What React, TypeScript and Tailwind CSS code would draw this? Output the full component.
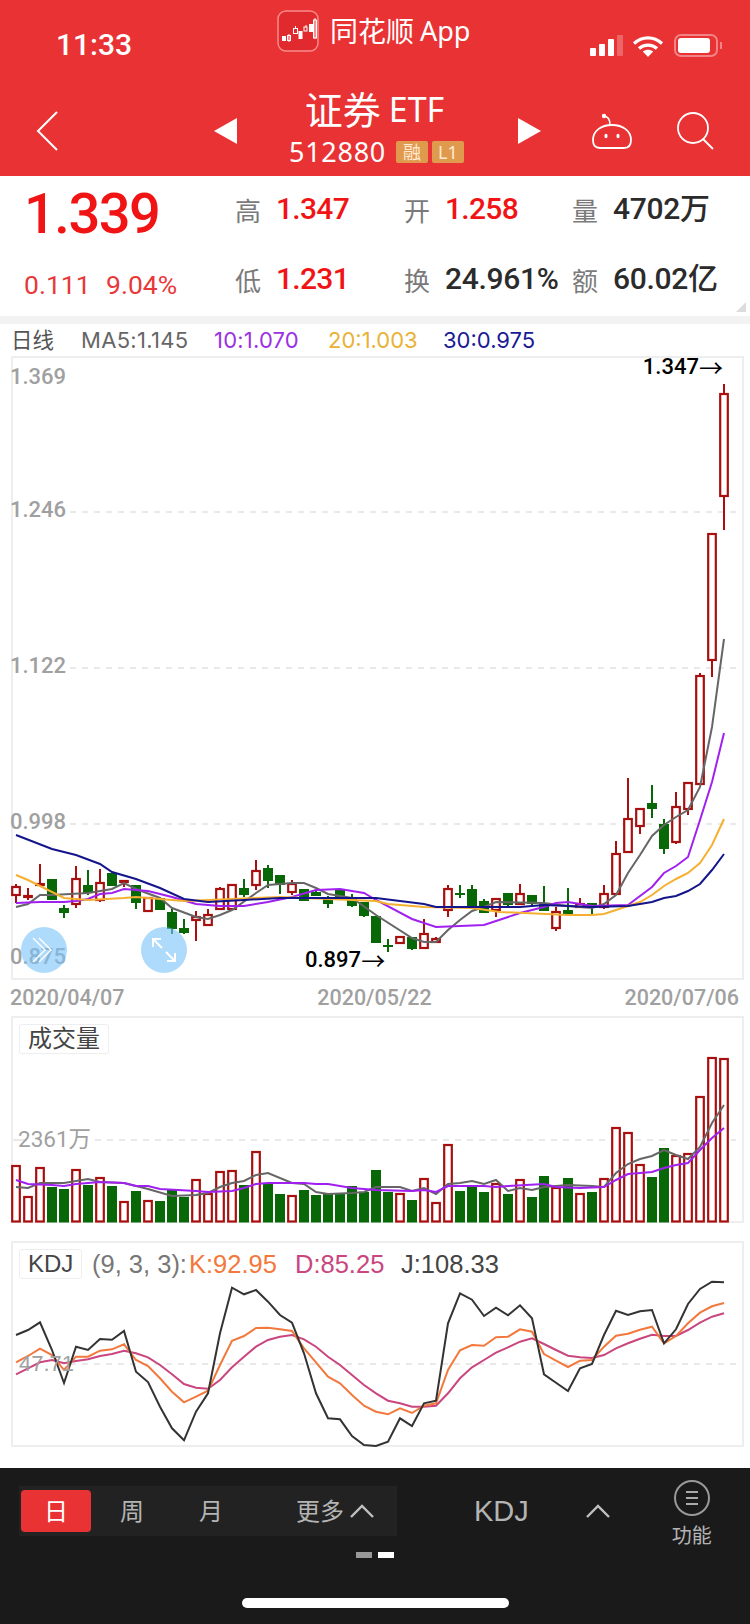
const RED = "#a80f0f";
const GREEN = "#086808";

// [up, high, bodyTop, bodyBottom, low], x is 16 + 12 * index
const candles: [number, number, number, number, number][] = [
  [1, 884, 887, 895, 903], [1, 888, 896, 897, 900], [1, 864, 884, 885, 885], [0, 879, 879, 900, 900],
  [0, 905, 908, 913, 918], [1, 866, 879, 904, 908], [0, 870, 885, 893, 895], [1, 869, 883, 900, 902],
  [0, 873, 873, 886, 886], [1, 880, 881, 882, 887], [0, 885, 885, 903, 909], [1, 898, 898, 911, 912],
  [0, 898, 898, 910, 910], [0, 909, 912, 929, 934], [0, 919, 928, 933, 934], [1, 911, 917, 920, 941],
  [1, 909, 915, 925, 926], [1, 887, 889, 909, 909], [1, 885, 885, 909, 909], [0, 879, 888, 895, 897],
  [1, 860, 871, 885, 890], [0, 865, 868, 881, 888], [0, 875, 875, 885, 894], [1, 880, 884, 892, 895],
  [0, 889, 889, 901, 901], [0, 891, 892, 896, 896], [0, 896, 897, 904, 908], [0, 890, 890, 897, 900],
  [0, 894, 897, 906, 907], [0, 902, 902, 916, 917], [0, 916, 916, 943, 943], [0, 939, 945, 946, 952],
  [1, 937, 937, 943, 943], [0, 937, 937, 949, 950], [1, 919, 934, 948, 948], [1, 937, 939, 942, 942],
  [1, 885, 889, 910, 917], [0, 885, 893, 894, 898], [0, 885, 889, 906, 907], [0, 899, 901, 913, 913],
  [1, 899, 899, 910, 917], [0, 893, 893, 905, 907], [1, 884, 894, 904, 904], [0, 895, 895, 904, 907],
  [0, 886, 903, 911, 911], [1, 907, 912, 928, 931], [0, 888, 910, 914, 914], [1, 898, 904, 907, 907],
  [0, 903, 903, 908, 914], [1, 885, 894, 907, 909], [1, 841, 854, 894, 894], [1, 778, 819, 852, 853],
  [1, 809, 809, 826, 834], [0, 785, 803, 809, 818], [0, 819, 824, 849, 854], [1, 792, 807, 842, 844],
  [1, 783, 783, 809, 815], [1, 673, 676, 784, 784], [1, 534, 534, 660, 677], [1, 384, 394, 496, 530],
];

const volumeTops = [
  1166, 1197, 1168, 1187, 1189, 1170, 1185, 1178, 1186, 1202, 1191, 1201, 1201, 1190, 1197, 1180, 1194, 1172, 1171, 1185,
  1152, 1184, 1194, 1196, 1190, 1195, 1194, 1193, 1186, 1192, 1170, 1192, 1194, 1200, 1179, 1203, 1145, 1191, 1187, 1192,
  1184, 1194, 1180, 1197, 1176, 1188, 1178, 1194, 1192, 1179, 1128, 1133, 1165, 1177, 1148, 1156, 1154, 1097, 1058, 1059,
];

const ma5 = "16,907 28,904 40,895 52,895 88,893 112,889 124,883 136,889 160,898 172,908 196,917 208,919 220,915 232,910 256,893 268,885 292,883 304,883 316,888 328,894 352,898 376,915 412,938 424,942 436,942 448,930 460,920 472,911 484,907 496,902 544,903 568,906 592,908 604,904 616,895 628,873 640,855 652,836 664,825 676,817 688,810 700,787 712,727 724,639";
const ma10 = "16,903 40,902 64,902 76,901 88,899 100,894 112,893 124,889 148,891 172,897 196,904 220,906 244,906 268,902 292,897 316,890 340,889 364,893 376,900 412,919 436,927 484,925 520,913 544,907 556,903 568,902 592,906 628,905 640,896 652,887 664,873 676,866 688,857 700,820 712,782 724,733";
const ma20 = "16,875 28,880 64,898 88,900 124,898 136,897 184,901 232,899 280,897 376,901 388,904 424,907 472,908 500,912 568,915 592,915 604,914 616,910 640,902 652,895 664,886 676,879 688,873 700,863 712,845 724,819";
const ma30 = "16,835 52,849 76,855 100,864 112,872 136,879 160,888 184,899 208,902 244,900 280,898 376,898 424,904 436,907 472,907 520,907 544,905 592,907 628,906 652,902 664,898 676,896 688,891 700,884 712,870 724,854";

const volGray = "16,1187 28,1188 40,1183 64,1183 88,1179 100,1182 124,1183 148,1189 172,1196 196,1195 208,1193 220,1187 232,1183 244,1181 256,1175 268,1173 292,1183 304,1184 316,1192 328,1194 352,1193 364,1192 376,1187 400,1187 412,1191 424,1188 436,1194 448,1184 460,1183 472,1181 484,1184 496,1180 508,1191 520,1188 532,1190 544,1187 568,1185 592,1186 604,1187 616,1173 628,1164 640,1159 652,1156 664,1150 676,1155 688,1159 700,1147 712,1123 724,1105";
const volPurple = "16,1180 28,1184 52,1185 64,1186 76,1184 100,1182 124,1183 136,1186 148,1186 160,1189 196,1191 208,1192 232,1191 244,1188 256,1184 268,1183 304,1183 316,1184 328,1184 352,1188 376,1190 412,1191 424,1190 436,1192 448,1186 484,1186 496,1187 508,1186 544,1184 556,1187 580,1188 604,1187 616,1180 628,1174 652,1172 664,1168 676,1165 688,1163 700,1150 712,1138 724,1128";

// plot values read off the reference, x is 16 + 12 * index
const kdjJ = [315, 300, 277, 360, 459, 350, 360, 327, 329, 303, 425, 456, 530, 595, 631, 545, 490, 310, 173, 193, 180, 215, 255, 278, 370, 490, 565, 568, 618, 645, 648, 635, 565, 588, 520, 512, 280, 190, 209, 258, 233, 256, 226, 265, 433, 458, 483, 415, 402, 315, 242, 255, 244, 240, 340, 298, 222, 177, 155, 157];
const kdjK = [397, 378, 356, 375, 420, 380, 380, 362, 358, 343, 390, 408, 445, 485, 517, 500, 482, 405, 332, 318, 294, 293, 298, 303, 355, 397, 440, 460, 495, 527, 545, 553, 535, 549, 527, 520, 420, 361, 345, 347, 322, 320, 298, 305, 372, 392, 411, 392, 390, 350, 317, 311, 299, 290, 340, 318, 280, 248, 229, 219];
const kdjD = [433, 415, 397, 390, 400, 393, 388, 378, 372, 362, 370, 382, 405, 433, 462, 473, 476, 450, 412, 380, 350, 330, 320, 315, 328, 350, 380, 405, 435, 465, 490, 512, 520, 530, 530, 527, 490, 445, 412, 390, 368, 352, 335, 325, 342, 360, 377, 382, 384, 375, 355, 340, 326, 314, 318, 318, 300, 278, 260, 250];

const kdjPoints = (values: number[]) =>
  values.map((v, i) => `${16 + 12 * i},${(1230 + v / 3).toFixed(1)}`).join(" ");

function Logo() {
  return (
    <svg width="42" height="42" viewBox="0 0 42 42" fill="none" className="shrink-0">
      <rect x="1" y="1" width="40" height="40" rx="8" fill="#e02a2e" stroke="#f98a8a" strokeWidth="1.5" />
      <rect x="5" y="26" width="4" height="5" fill="#fff" />
      <rect x="10.5" y="25.5" width="3" height="5" stroke="#fff" />
      <path d="M12 24v8M18.5 16v3M29 15v2M38 8v21" stroke="#fff" />
      <rect x="16.5" y="18.5" width="4" height="5" stroke="#fff" />
      <rect x="21.5" y="21" width="4" height="8" fill="#fff" />
      <rect x="27" y="17" width="3" height="4" stroke="#fff" />
      <rect x="32" y="14" width="4" height="8" fill="#fff" />
      <rect x="36.5" y="10" width="3" height="18" stroke="#fff" />
    </svg>
  );
}

function StatusIcons() {
  return (
    <div className="flex items-center mt-[2px]">
      <div className="flex items-end gap-[3px] h-[21px]">
        <div className="w-[6px] h-[8px] rounded-[1px] bg-white" />
        <div className="w-[6px] h-[12px] rounded-[1px] bg-white" />
        <div className="w-[6px] h-[17px] rounded-[1px] bg-white" />
        <div className="w-[6px] h-[21px] rounded-[1px] bg-white/25" />
      </div>
      <svg width="32" height="22" viewBox="0 0 32 22" fill="none" className="ml-[9px]">
        <path d="M2 8.5C10 1 22 1 30 8.5" stroke="#fff" strokeWidth="3.2" />
        <path d="M7 13.5C12 9 20 9 25 13.5" stroke="#fff" strokeWidth="3.2" />
        <path d="M16 22l-5.2-5.4c3-2.4 7.4-2.4 10.4 0z" fill="#fff" />
      </svg>
      <div className="ml-[10px] w-[44px] h-[23px] rounded-[7px] border-2 border-white/40 flex items-center px-[2px]">
        <div className="w-[32px] h-[15px] rounded-[3px] bg-white" />
      </div>
      <div className="ml-[2px] w-[2px] h-[7px] bg-white/40" />
    </div>
  );
}

function Header() {
  return (
    <div className="h-[176px] shrink-0 bg-[#e93234] text-white relative">
      <div className="flex h-[64px] pl-[56px] pr-[28px] items-start">
        <div className="w-[221px] pt-[26px] text-[30px] leading-[38px] font-medium font-['Roboto',sans-serif]">
          11:33
        </div>
        <div className="flex items-center pt-[10px]">
          <Logo />
          <div className="ml-[11px] text-[28px] leading-[42px]">同花顺</div>
          <div className="ml-[6px] text-[27px] leading-[42px]">App</div>
        </div>
        <div className="ml-auto pt-[32px]">
          <StatusIcons />
        </div>
      </div>
      <div className="flex h-[112px] relative">
        <svg width="22" height="40" viewBox="0 0 22 40" fill="none" className="ml-[36px] mt-[47px]">
          <path d="M21 1L2 20l19 19" stroke="#fff" strokeWidth="2" />
        </svg>
        <svg width="23" height="26" viewBox="0 0 23 26" className="ml-[156px] mt-[54px]">
          <path d="M23 0v26L0 13z" fill="#fff" />
        </svg>
        <div className="w-[281px] flex flex-col items-center">
          <div className="flex items-center h-[46px] mt-[22px] pr-[6px]">
            <span className="text-[38px] leading-[46px]">证券</span>
            <span className="ml-[8px] text-[34px] leading-[46px]">ETF</span>
          </div>
          <div className="flex items-center h-[26px] mt-[7px] -ml-[2px]">
            <span className="text-[27px] leading-[26px] tracking-[0.7px] mr-[10px]">512880</span>
            <span className="w-[32px] h-[22px] rounded-[2px] bg-[#e09a4e] text-[18px] leading-[22px] text-center text-[#ffe9d2]">融</span>
            <span className="ml-[4px] w-[32px] h-[22px] rounded-[2px] bg-[#e09a4e] text-[18px] leading-[22px] text-center text-[#ffe9d2]">L1</span>
          </div>
        </div>
        <svg width="23" height="26" viewBox="0 0 23 26" className="mt-[54px]">
          <path d="M0 0v26l23-13z" fill="#fff" />
        </svg>
        <svg width="42" height="38" viewBox="0 0 42 38" fill="none" className="ml-[50px] mt-[48px]">
          <circle cx="13" cy="4" r="2.2" fill="#fff" />
          <path d="M13 4c4 .5 6 3 6 9" stroke="#fff" strokeWidth="1.6" />
          <path d="M2 28c0-9 8-15 19-15s19 6 19 15c0 5-2 8-7 8H9c-5 0-7-3-7-8z" stroke="#fff" strokeWidth="1.8" />
          <ellipse cx="15" cy="24" rx="1.6" ry="2.2" fill="#fff" />
          <ellipse cx="27" cy="24" rx="1.6" ry="2.2" fill="#fff" />
        </svg>
        <svg width="38" height="38" viewBox="0 0 38 38" fill="none" className="ml-[43px] mt-[48px]">
          <circle cx="17" cy="16" r="15" stroke="#fff" strokeWidth="1.8" />
          <path d="M27 27l10 10" stroke="#fff" strokeWidth="1.8" />
        </svg>
      </div>
    </div>
  );
}

function Stat({ label, value, dark }: { label: string; value: string; dark?: boolean }) {
  return (
    <div className="flex items-center">
      <span className="w-[41px] shrink-0 text-[26px] text-[#7a7a7a]">{label}</span>
      <span
        className={
          (dark ? "text-[#2b2b2b] tracking-[-0.3px] " : "text-[#f01414] tracking-[-0.7px] ") +
          "pb-[5px] text-[30px] font-medium whitespace-nowrap font-['Roboto','Noto_Sans_CJK_SC',sans-serif]"
        }
      >
        {value}
      </span>
    </div>
  );
}

function Quote() {
  return (
    <div className="h-[140px] shrink-0 flex relative">
      <div className="w-[235px] shrink-0 pl-[24px] pt-[2px] font-['Roboto','Noto_Sans_CJK_SC',sans-serif]">
        <div className="text-[56px] leading-[72px] font-medium text-[#f01414] tracking-[-1.5px]">1.339</div>
        <div className="flex mt-[15px] text-[#e8383a] text-[26.5px] leading-[40px]">
          <span className="w-[82px]">0.111</span>
          <span>9.04%</span>
        </div>
      </div>
      <div className="grid grid-cols-[169px_168px_1fr] grid-rows-2 flex-1">
        <Stat label="高" value="1.347" />
        <Stat label="开" value="1.258" />
        <Stat label="量" value="4702万" dark />
        <Stat label="低" value="1.231" />
        <Stat label="换" value="24.961%" dark />
        <Stat label="额" value="60.02亿" dark />
      </div>
      <svg width="10" height="10" viewBox="0 0 10 10" className="absolute right-[4px] bottom-[4px]">
        <path d="M0 10L10 0v10z" fill="#dcdcdc" />
      </svg>
    </div>
  );
}

function Legend() {
  return (
    <div className="h-[32px] shrink-0 flex items-center text-[22px] leading-[32px] font-['Inter','Noto_Sans_CJK_SC',sans-serif]">
      <span className="ml-[11px] w-[70px] text-[21.5px] text-[#555]">日线</span>
      <span className="w-[133px] text-[#666] tracking-[0.3px]">MA5:1.145</span>
      <span className="w-[114px] text-[#9b30e4] tracking-[0.2px]">10:1.070</span>
      <span className="w-[115px] text-[#e9b234]">20:1.003</span>
      <span className="text-[#1a1a96]">30:0.975</span>
    </div>
  );
}

function Grid({ y, x1 = 70 }: { y: number; x1?: number }) {
  return <line x1={x1} x2="736" y1={y} y2={y} stroke="#e2e2e2" strokeWidth="1.5" strokeDasharray="6 6" />;
}

function AxisLabel({ top, children }: { top: number; children: string }) {
  return (
    <span
      className="absolute left-[-1px] text-[22px] leading-[26px] font-medium text-[#a0a0a0]"
      style={{ top }}
    >
      {children}
    </span>
  );
}

function Arrow() {
  return <span className="font-['Noto_Sans_CJK_SC',sans-serif] font-normal text-[24px]">→</span>;
}

function MainChart() {
  return (
    <div className="relative ml-[11px] w-[733px] h-[624px] shrink-0 ring-2 ring-inset ring-[#eeeeee] font-['Roboto',sans-serif]">
      <svg className="block w-full h-full" viewBox="11 356 733 624" fill="none">
        <Grid y={512} />
        <Grid y={668} />
        <Grid y={824} />
        {candles.map(([up, high, top, bottom, low], i) => {
          const x = 16 + 12 * i;
          const color = up ? RED : GREEN;
          return (
            <g key={i}>
              <line x1={x} x2={x} y1={high} y2={low} stroke={color} strokeWidth="2" />
              {up ? (
                <rect x={x - 3.8} y={top} width="7.6" height={bottom - top} fill="#fff" stroke={color} strokeWidth="2.2" />
              ) : (
                <rect x={x - 5} y={top} width="10" height={Math.max(bottom - top, 2)} fill={color} />
              )}
            </g>
          );
        })}
        <polyline points={ma5} stroke="#666666" strokeWidth="2" />
        <polyline points={ma10} stroke="#a020f0" strokeWidth="2" />
        <polyline points={ma20} stroke="#f5b030" strokeWidth="2" />
        <polyline points={ma30} stroke="#14148c" strokeWidth="2" />
      </svg>
      <AxisLabel top={8}>1.369</AxisLabel>
      <AxisLabel top={141}>1.246</AxisLabel>
      <AxisLabel top={297}>1.122</AxisLabel>
      <AxisLabel top={453}>0.998</AxisLabel>
      <AxisLabel top={588}>0.875</AxisLabel>
      <span className="absolute right-[21px] top-[-2px] flex items-center text-[22px] leading-[26px] font-medium text-black">
        1.347
        <Arrow />
      </span>
      <span className="absolute left-[294px] top-[591px] flex items-center text-[22px] leading-[26px] font-medium text-black">
        0.897
        <Arrow />
      </span>
      <div className="absolute left-[10px] top-[571px] w-[46px] h-[46px] rounded-full bg-[#78c3fa]/60 flex items-center justify-center">
        <svg width="26" height="26" viewBox="0 0 26 26" fill="none" stroke="#fff" strokeWidth="1.4">
          <path d="M2 1l12 12L2 25M8 1l12 12L8 25" />
        </svg>
      </div>
      <div className="absolute left-[130px] top-[571px] w-[46px] h-[46px] rounded-full bg-[#78c3fa]/60 flex items-center justify-center">
        <svg width="24" height="24" viewBox="0 0 24 24" fill="none" stroke="#fff" strokeWidth="2">
          <path d="M1 9V1h8M1 1l9 9M23 15v8h-8M23 23l-9-9" />
        </svg>
      </div>
    </div>
  );
}

function Dates() {
  return (
    <div className="h-[36px] shrink-0 ml-[10px] w-[729px] flex items-center justify-between text-[21.5px] font-medium text-[#a0a0a0] font-['Roboto',sans-serif]">
      <span>2020/04/07</span>
      <span>2020/05/22</span>
      <span>2020/07/06</span>
    </div>
  );
}

function Tag({ children }: { children: string }) {
  return (
    <div className="absolute left-[8px] top-[8px] h-[30px] px-[8px] flex items-center rounded-[3px] border border-[#eeeeee] bg-white text-[24px] text-[#444]">
      {children}
    </div>
  );
}

function VolumeChart() {
  return (
    <div className="relative ml-[11px] w-[733px] h-[207px] shrink-0 ring-2 ring-inset ring-[#eeeeee] font-['Roboto','Noto_Sans_CJK_SC',sans-serif]">
      <svg className="block w-full h-full" viewBox="11 1016 733 207" fill="none">
        <Grid y={1140} x1={95} />
        <line x1="13" x2="26" y1="1140" y2="1140" stroke="#e2e2e2" strokeWidth="1.5" />
        {volumeTops.map((top, i) => {
          const x = 16 + 12 * i;
          return candles[i][0] ? (
            <rect key={i} x={x - 3.8} y={top} width="7.6" height={1221.5 - top} fill="#fff" stroke={RED} strokeWidth="2.2" />
          ) : (
            <rect key={i} x={x - 5} y={top} width="10" height={1222.5 - top} fill={GREEN} />
          );
        })}
        <polyline points={volGray} stroke="#666666" strokeWidth="2" />
        <polyline points={volPurple} stroke="#a020f0" strokeWidth="2" />
      </svg>
      <Tag>成交量</Tag>
      <span className="absolute left-[7px] top-[109px] text-[22.5px] leading-[28px] text-[#a0a0a0]">2361万</span>
    </div>
  );
}

function KdjChart() {
  return (
    <div className="relative ml-[11px] w-[733px] h-[206px] shrink-0 ring-2 ring-inset ring-[#eeeeee] font-['Liberation_Sans',sans-serif]">
      <svg className="block w-full h-full" viewBox="11 1241 733 206" fill="none">
        <Grid y={1364} />
        <polyline points={kdjPoints(kdjD)} stroke="#c9467f" strokeWidth="2" />
        <polyline points={kdjPoints(kdjK)} stroke="#f2783c" strokeWidth="2" />
        <polyline points={kdjPoints(kdjJ)} stroke="#333333" strokeWidth="2" />
      </svg>
      <Tag>KDJ</Tag>
      <div className="absolute left-[81px] top-[8px] h-[30px] flex items-center text-[25.5px] whitespace-nowrap">
        <span className="w-[97px] text-[#777]">(9, 3, 3):</span>
        <span className="w-[106px] text-[#f2783c]">K:92.95</span>
        <span className="w-[106px] text-[#c9467f]">D:85.25</span>
        <span className="text-[#444]">J:108.33</span>
      </div>
      <span className="absolute left-[8px] top-[110px] text-[22px] leading-[26px] font-medium text-[#a0a0a0]">47.71</span>
    </div>
  );
}

function Chevron({ className }: { className: string }) {
  return (
    <svg width="24" height="14" viewBox="0 0 24 14" fill="none" className={className}>
      <path d="M1 13L12 2l11 11" stroke="#c0c0c0" strokeWidth="2.4" />
    </svg>
  );
}

function BottomBar() {
  return (
    <div className="flex-1 bg-[#1a1a1a] text-[#b4b4b4]">
      <div className="flex h-[84px] pt-[18px] relative">
        <div className="ml-[19px] w-[378px] h-[50px] bg-[#222222] flex items-center text-[24px]">
          <div className="ml-[2px] w-[70px] h-[42px] rounded-[4px] bg-[#e93234] text-white flex items-center justify-center">日</div>
          <span className="ml-[29px]">周</span>
          <span className="ml-[55px]">月</span>
          <span className="ml-[73px]">更多</span>
          <Chevron className="ml-[6px]" />
        </div>
        <span className="ml-[77px] h-[50px] text-[29px] leading-[50px] font-['Liberation_Sans',sans-serif]">KDJ</span>
        <Chevron className="ml-[57px] mt-[18px]" />
        <div className="ml-[62px] -mt-[6px] flex flex-col items-center">
          <div className="w-[36px] h-[36px] rounded-full border-2 border-[#999] flex flex-col items-center justify-center gap-[4px]">
            <div className="w-[12px] h-[2px] bg-[#aaa]" />
            <div className="w-[12px] h-[2px] bg-[#aaa]" />
            <div className="w-[12px] h-[2px] bg-[#aaa]" />
          </div>
          <span className="mt-[8px] text-[20px] leading-[24px]">功能</span>
        </div>
      </div>
      <div className="flex justify-center gap-[6px] ml-[-1px]">
        <div className="w-[16px] h-[6px] bg-[#999]" />
        <div className="w-[16px] h-[6px] bg-white" />
      </div>
      <div className="mt-[40px] mx-auto w-[267px] h-[10px] rounded-full bg-white" />
    </div>
  );
}

export default function App() {
  return (
    <div className="w-[750px] h-[1624px] overflow-hidden bg-white flex flex-col font-['Noto_Sans','Noto_Sans_CJK_SC',sans-serif]">
      <Header />
      <Quote />
      <div className="h-[8px] shrink-0 bg-[#f3f3f3]" />
      <Legend />
      <MainChart />
      <Dates />
      <VolumeChart />
      <div className="h-[18px] shrink-0" />
      <KdjChart />
      <div className="h-[21px] shrink-0" />
      <BottomBar />
    </div>
  );
}
